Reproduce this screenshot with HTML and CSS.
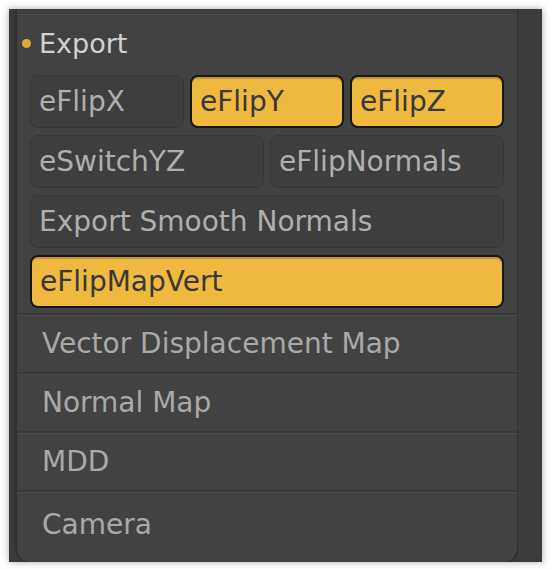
FILE: index.html
```html
<!DOCTYPE html>
<html lang="en">
<head>
    <meta charset="UTF-8">
    <title>Export</title>
    <link rel="stylesheet" href="styles.css">
</head>
<body>
    <div class="window">
        <div class="gutter"></div>
        <div class="panel">
            <div class="panel-top"></div>
            <div class="header">
                <span class="dot"></span>
                <span class="title">Export</span>
            </div>
            <div class="buttons">
                <div class="row three">
                    <div class="btn">eFlipX</div>
                    <div class="btn on">eFlipY</div>
                    <div class="btn on">eFlipZ</div>
                </div>
                <div class="row two">
                    <div class="btn">eSwitchYZ</div>
                    <div class="btn">eFlipNormals</div>
                </div>
                <div class="row">
                    <div class="btn">Export Smooth Normals</div>
                </div>
                <div class="row">
                    <div class="btn on">eFlipMapVert</div>
                </div>
            </div>
            <div class="item">Vector Displacement Map</div>
            <div class="item">Normal Map</div>
            <div class="item">MDD</div>
            <div class="item last">Camera</div>
        </div>
        <div class="rail"></div>
    </div>
</body>
</html>
```

FILE: styles.css
```css
/* Page */
body {
    margin: 0;
    background: #fff;
    font-family: "DejaVu Sans", sans-serif;
}

.window {
    margin: 9px;
    width: 533px;
    height: 553px;
    display: flex;
    background: #3b3b3b;
    box-shadow: 0 0 7px rgba(0, 0, 0, 0.35);
    overflow: hidden;
}

.gutter {
    width: 7px;
    background: #3a3a3a;
}

.rail {
    width: 24px;
    background: #3c3c3c;
}

/* Panel */
.panel {
    flex: 1;
    display: flex;
    flex-direction: column;
    background: #424242;
    border-left: 1px solid #2e2e2e;
    border-right: 1px solid #2e2e2e;
    border-radius: 0 0 14px 14px;
    box-shadow: 1px 0 2px rgba(0, 0, 0, 0.3), -1px 0 1px rgba(0, 0, 0, 0.2);
}

.panel-top {
    height: 5px;
    background: #3f3f3f;
    border-bottom: 1px solid #4b4b4b;
}

.header {
    height: 55px;
    display: flex;
    align-items: center;
    padding-left: 5px;
    padding-top: 2px;
    box-sizing: border-box;
}

.dot {
    width: 9px;
    height: 9px;
    border-radius: 50%;
    background: #e0aa36;
    margin-right: 8px;
}

.title {
    color: #d2d2d2;
    font-size: 27px;
}

/* Buttons */
.buttons {
    display: flex;
    flex-direction: column;
    gap: 7px;
    padding: 5px 13px 5px 13px;
}

.row {
    display: grid;
    grid-template-columns: 1fr;
    gap: 6px;
}

.row.three {
    grid-template-columns: 1fr 1fr 1fr;
}

.row.two {
    grid-template-columns: 1fr 1fr;
}

.btn {
    height: 53px;
    box-sizing: border-box;
    display: flex;
    align-items: center;
    padding-left: 8px;
    border: 1px solid #363636;
    border-radius: 8px;
    background: #3e3e3e;
    color: #afafaf;
    font-size: 28px;
    white-space: nowrap;
}

.btn.on {
    border: 2px solid #161616;
    background: #efb93f;
    color: #383838;
    box-shadow: inset 0 2px 0 #c8962f;
}

/* List */
.item {
    height: 59px;
    display: flex;
    align-items: center;
    padding-left: 25px;
    box-sizing: border-box;
    border-top: 2px solid #393939;
    box-shadow: inset 0 1px 0 #4b4b4b;
    color: #a9a9a9;
    font-size: 28px;
}

.item.last {
    flex: 1;
    padding-bottom: 6px;
}
```
